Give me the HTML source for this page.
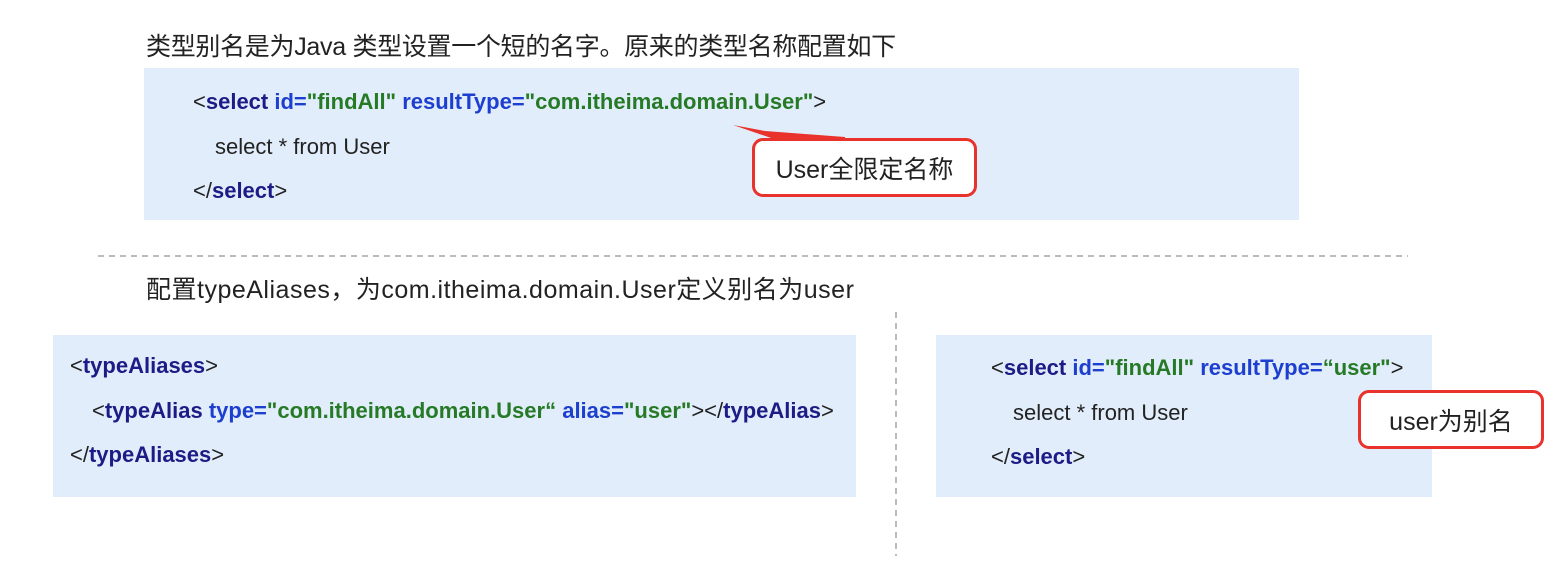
<!DOCTYPE html>
<html><head><meta charset="utf-8"><style>
body{margin:0;width:1558px;height:563px;background:#fff;position:relative;overflow:hidden;font-family:"Liberation Sans","Noto Sans CJK SC",sans-serif;color:#222}
.t{position:absolute;font-size:25px;white-space:nowrap;letter-spacing:-0.3px}
.box{position:absolute;background:#e2edfb}
.c{position:absolute;font-size:22px;white-space:nowrap;letter-spacing:0px}
.tg{color:#1c1c86;font-weight:bold}
.at{color:#1d3fcf;font-weight:bold}
.v{color:#267a26;font-weight:bold}
.call{position:absolute;background:#fff;border:3px solid #e8322b;border-radius:11px;font-size:25px;box-sizing:border-box;display:flex;align-items:center;justify-content:center}
</style></head><body>
<div class="t" style="left:146px;top:27px">类型别名是为Java 类型设置一个短的名字。原来的类型名称配置如下</div>
<div class="box" style="left:144px;top:68px;width:1155px;height:152px"></div>
<div class="c" style="left:193px;top:89px">&lt;<span class="tg">select</span> <span class="at">id=</span><span class="v">"findAll"</span> <span class="at">resultType=</span><span class="v">"com.itheima.domain.User"</span>&gt;</div>
<div class="c" style="left:215px;top:134px">select * from User</div>
<div class="c" style="left:193px;top:178px">&lt;/<span class="tg">select</span>&gt;</div>
<svg style="position:absolute;left:0;top:0" width="1558" height="563">
<path d="M733 125 L765 131 L845 137 L845 146 L780 141 Z" fill="#e8322b"/>
<path d="M1343 378 L1370 381 L1430 388 L1430 396 L1372 389 Z" fill="#e8322b"/>
<line x1="98" y1="256" x2="1408" y2="256" stroke="#bbb" stroke-width="2" stroke-dasharray="6,5"/>
<line x1="896" y1="312" x2="896" y2="556" stroke="#bbb" stroke-width="2" stroke-dasharray="6,5"/>
</svg>
<div class="call" style="left:752px;top:138px;width:225px;height:59px">User全限定名称</div>
<div class="t" style="left:146px;top:270px;letter-spacing:0.5px">配置typeAliases，为com.itheima.domain.User定义别名为user</div>
<div class="box" style="left:53px;top:335px;width:803px;height:162px"></div>
<div class="c" style="left:70px;top:353px">&lt;<span class="tg">typeAliases</span>&gt;</div>
<div class="c" style="left:92px;top:398px">&lt;<span class="tg">typeAlias</span> <span class="at">type=</span><span class="v">"com.itheima.domain.User“</span> <span class="at">alias=</span><span class="v">"user"</span>&gt;&lt;/<span class="tg">typeAlias</span>&gt;</div>
<div class="c" style="left:70px;top:442px">&lt;/<span class="tg">typeAliases</span>&gt;</div>
<div class="box" style="left:936px;top:335px;width:496px;height:162px"></div>
<div class="c" style="left:991px;top:355px">&lt;<span class="tg">select</span> <span class="at">id=</span><span class="v">"findAll"</span> <span class="at">resultType=</span><span class="v">“user"</span>&gt;</div>
<div class="c" style="left:1013px;top:400px">select * from User</div>
<div class="c" style="left:991px;top:444px">&lt;/<span class="tg">select</span>&gt;</div>
<div class="call" style="left:1358px;top:390px;width:186px;height:59px">user为别名</div>
</body></html>
